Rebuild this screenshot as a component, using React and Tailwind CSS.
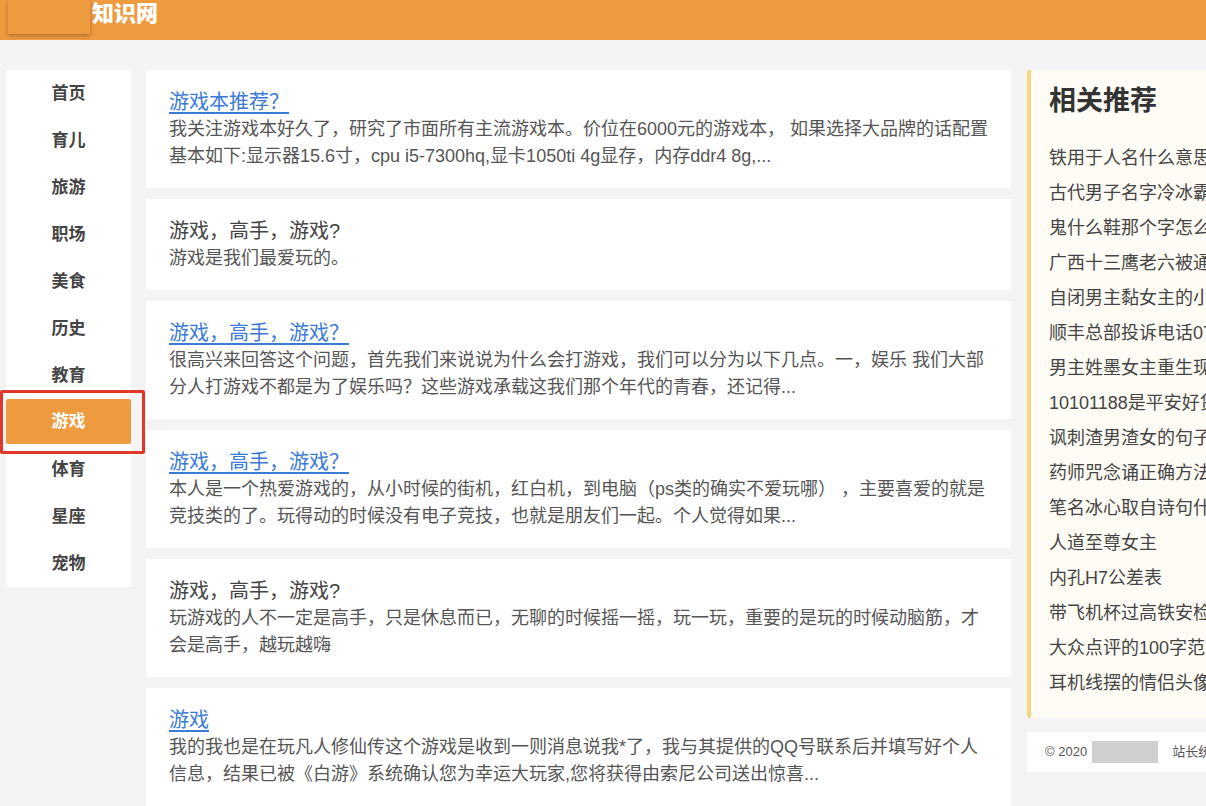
const navItems = ['首页', '育儿', '旅游', '职场', '美食', '历史', '教育', '游戏', '体育', '星座', '宠物']

const posts = [
  {
    title: '游戏本推荐？',
    link: true,
    body: '我关注游戏本好久了，研究了市面所有主流游戏本。价位在6000元的游戏本，  如果选择大品牌的话配置基本如下:显示器15.6寸，cpu i5-7300hq,显卡1050ti 4g显存，内存ddr4 8g,...',
  },
  { title: '游戏，高手，游戏?', link: false, body: '游戏是我们最爱玩的。' },
  {
    title: '游戏，高手，游戏？',
    link: true,
    body: '很高兴来回答这个问题，首先我们来说说为什么会打游戏，我们可以分为以下几点。一，娱乐 我们大部分人打游戏不都是为了娱乐吗？这些游戏承载这我们那个年代的青春，还记得...',
  },
  {
    title: '游戏，高手，游戏？',
    link: true,
    body: '本人是一个热爱游戏的，从小时候的街机，红白机，到电脑（ps类的确实不爱玩哪） ，主要喜爱的就是竞技类的了。玩得动的时候没有电子竞技，也就是朋友们一起。个人觉得如果...',
  },
  {
    title: '游戏，高手，游戏?',
    link: false,
    body: '玩游戏的人不一定是高手，只是休息而已，无聊的时候摇一摇，玩一玩，重要的是玩的时候动脑筋，才会是高手，越玩越嗨',
  },
  {
    title: '游戏',
    link: true,
    body: '我的我也是在玩凡人修仙传这个游戏是收到一则消息说我*了，我与其提供的QQ号联系后并填写好个人信息，结果已被《白游》系统确认您为幸运大玩家,您将获得由索尼公司送出惊喜...',
  },
]

const related = [
  '铁用于人名什么意思',
  '古代男子名字冷冰霸气',
  '鬼什么鞋那个字怎么读',
  '广西十三鹰老六被通缉',
  '自闭男主黏女主的小说',
  '顺丰总部投诉电话0755',
  '男主姓墨女主重生现代',
  '10101188是平安好贷吗',
  '讽刺渣男渣女的句子',
  '药师咒念诵正确方法',
  '笔名冰心取自诗句什么',
  '人道至尊女主',
  '内孔H7公差表',
  '带飞机杯过高铁安检',
  '大众点评的100字范文',
  '耳机线摆的情侣头像',
]

export default function App() {
  return (
    <div
      className="min-h-[806px] w-[1206px] overflow-hidden bg-[#f4f4f4]"
      style={{ fontFamily: '"Liberation Sans", "Noto Sans CJK SC", sans-serif' }}>

      {/* 顶部栏 */}
      <header className="h-[40px] bg-[#ee9a3f] flex items-start">
        <div className="ml-[8px] w-[82px] h-[34px] bg-[#ee9a3f] shadow-[0_2px_4px_rgba(0,0,0,0.25)]"></div>
        <span className="ml-[2px] mt-[1px] text-white text-[22px] font-black leading-[26px]">知识网</span>
      </header>

      <div className="flex items-start pt-[30px] pl-[6px]">
        {/* 左侧分类 */}
        <nav className="w-[125px] shrink-0 bg-white">
          {navItems.map((name) => {
            const active = name === '游戏'
            return (
              <div key={name} className="relative h-[47px] flex items-center justify-center">
                {active && (
                  <>
                    <div className="absolute left-0 right-0 top-0 h-[45px] bg-[#ee9a3f] rounded-[2px]"></div>
                    <div className="absolute -left-[6px] -right-[14px] -top-[9px] -bottom-[8px] border-[3px] border-[#e0372b] rounded-[2px]"></div>
                  </>
                )}
                <span className={`relative text-[17px] font-bold ${active ? 'text-white -mt-[2px]' : 'text-[#444]'}`}>{name}</span>
              </div>
            )
          })}
        </nav>

        {/* 文章列表 */}
        <main className="w-[865px] shrink-0 ml-[15px] flex flex-col gap-[11px]">
          {posts.map((p, i) => (
            <div key={i} className="bg-white pl-[23px] pr-[20px] pt-[18px] pb-[18px]">
              {p.link ? (
                <a href="#" className="block w-fit text-[20px] leading-[28px] text-[#3b7bd6] underline underline-offset-[3px]">{p.title}</a>
              ) : (
                <p className="text-[20px] leading-[28px] text-[#444]">{p.title}</p>
              )}
              <p className="text-[18px] leading-[27px] text-[#555]">{p.body}</p>
            </div>
          ))}
        </main>

        {/* 右侧推荐 */}
        <aside className="w-[300px] shrink-0 ml-[16px]">
          <div className="bg-[#fffcf5] border-l-[4px] border-[#f6d77c] pl-[18px] pt-[14px] pb-[17px] rounded-l-[3px]">
            <h2 className="text-[27px] leading-[34px] font-bold text-[#333]">相关推荐</h2>
            <ul className="mt-[23px]">
              {related.map((t) => (
                <li key={t} className="text-[18px] leading-[35px] text-[#444] whitespace-nowrap">{t}</li>
              ))}
            </ul>
          </div>
          <div className="mt-[14px] h-[40px] bg-white flex items-center pl-[18px] text-[13px] text-[#555] whitespace-nowrap">
            <span>© 2020</span>
            <span className="ml-[5px] w-[66px] h-[22px] bg-[#cfcfcf]"></span>
            <span className="ml-[14px]">站长统计</span>
          </div>
        </aside>
      </div>
    </div>
  )
}
